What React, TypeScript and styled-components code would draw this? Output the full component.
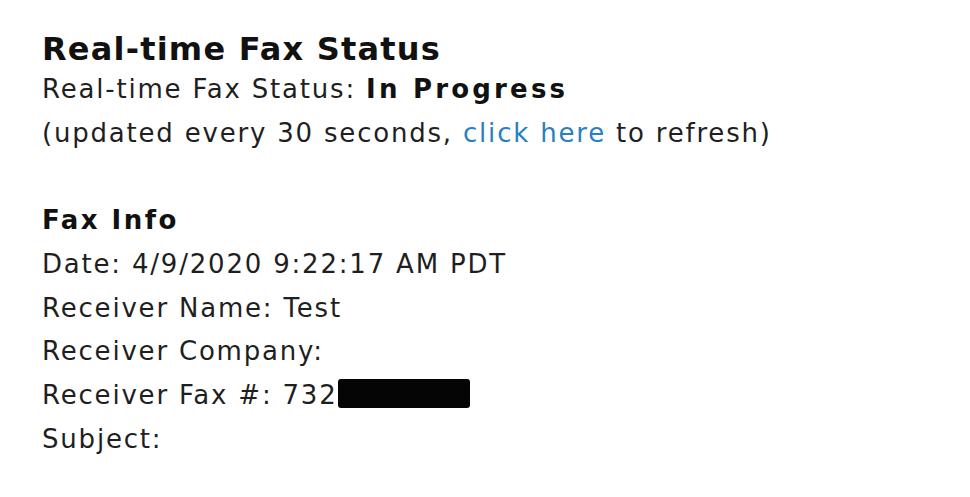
import styled, { createGlobalStyle } from "styled-components";

const GlobalStyle = createGlobalStyle`
  html, body {
    margin: 0;
    padding: 0;
    background: #ffffff;
  }
`;

const Page = styled.div`
  padding: 30px 0 0 42px;
  font-family: "DejaVu Sans", Verdana, sans-serif;
  font-size: 26px;
  line-height: 43.7px;
  letter-spacing: 1.8px;
  color: #1f1f1f;
`;

const Title = styled.h1`
  margin: 0;
  font-size: 32px;
  line-height: 38px;
  letter-spacing: 1.2px;
  font-weight: bold;
  color: #111111;
`;

const Line = styled.div`
  white-space: nowrap;
`;

const Spacer = styled.div`
  height: 43.7px;
`;

const Strong = styled.span`
  font-weight: bold;
  letter-spacing: 3.2px;
  color: #111111;
`;

const Heading = styled.div`
  font-weight: bold;
  letter-spacing: 2.5px;
  color: #111111;
`;

const Link = styled.a`
  color: #2a7fc3;
  text-decoration: none;
  cursor: pointer;
`;

const Redacted = styled.span`
  display: inline-block;
  width: 132px;
  height: 29px;
  vertical-align: -4px;
  background: #050505;
  border-radius: 3px;
`;

type InfoProps = {
  label: string;
  value?: string;
  redacted?: boolean;
};

function InfoRow(props: InfoProps) {
  return (
    <Line>
      {props.label}:{props.value ? ` ${props.value}` : ""}
      {props.redacted && <Redacted />}
    </Line>
  );
}

export default function App() {
  return (
    <>
      <GlobalStyle />
      <Page>
        <Title>Real-time Fax Status</Title>
        <Line>
          Real-time Fax Status: <Strong>In Progress</Strong>
        </Line>
        <Line>
          (updated every 30 seconds, <Link>click here</Link> to refresh)
        </Line>
        <Spacer />
        <Heading>Fax Info</Heading>
        <InfoRow label="Date" value="4/9/2020 9:22:17 AM PDT" />
        <InfoRow label="Receiver Name" value="Test" />
        <InfoRow label="Receiver Company" />
        <InfoRow label="Receiver Fax #" value="732" redacted />
        <InfoRow label="Subject" />
      </Page>
    </>
  );
}
